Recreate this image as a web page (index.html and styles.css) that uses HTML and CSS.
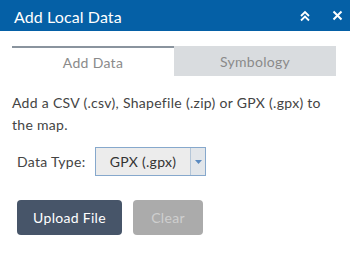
FILE: index.html
```html
<!DOCTYPE html>
<html lang="en">
<head>
    <meta charset="UTF-8">
    <title>Add Local Data</title>
    <link rel="stylesheet" href="styles.css">
</head>
<body>
    <div class="panel">
        <div class="panel-header">
            <span class="panel-title">Add Local Data</span>
            <div class="panel-icons">
                <svg class="icon" width="12" height="12" viewBox="0 0 12 12">
                    <path d="M2 6 L6 2 L10 6 M2 10.5 L6 6.5 L10 10.5" fill="none" stroke="#fff" stroke-width="1.8"/>
                </svg>
                <svg class="icon" width="11" height="11" viewBox="0 0 11 11">
                    <path d="M1.5 1.5 L9.5 9.5 M9.5 1.5 L1.5 9.5" fill="none" stroke="#fff" stroke-width="2"/>
                </svg>
            </div>
        </div>

        <div class="tabs">
            <div class="tab active">Add Data</div>
            <div class="tab">Symbology</div>
        </div>

        <p class="intro">Add a CSV (.csv), Shapefile (.zip) or GPX (.gpx) to the map.</p>

        <div class="field">
            <span class="field-label">Data Type:</span>
            <div class="select">
                <span class="select-value">GPX (.gpx)</span>
                <span class="select-arrow">
                    <svg width="7" height="4" viewBox="0 0 7 4"><path d="M0 0 L7 0 L3.5 4 Z" fill="#5a8ac0"/></svg>
                </span>
            </div>
        </div>

        <div class="actions">
            <button class="btn btn-primary">Upload File</button>
            <button class="btn btn-disabled">Clear</button>
        </div>
    </div>
</body>
</html>
```

FILE: styles.css
```css
body {
    margin: 0;
    background: #fff;
    font-family: Lato, "Open Sans", sans-serif;
    letter-spacing: 0.3px;
    color: #444;
}

.panel {
    width: 350px;
    height: 253px;
}

.panel-header {
    height: 31px;
    background-color: #0560a6;
    color: #fff;
    display: flex;
    align-items: center;
    justify-content: space-between;
    padding: 0 7px 0 14px;
}

.panel-title {
    font-size: 16px;
    padding-top: 1px;
    letter-spacing: 0.1px;
}

.panel-icons {
    display: flex;
    align-items: center;
    gap: 21px;
}

.icon {
    display: block;
}

.tabs {
    display: flex;
    margin: 15px 14px 0 12px;
}

.tab {
    flex: 1;
    height: 30px;
    box-sizing: border-box;
    display: flex;
    align-items: center;
    justify-content: center;
    font-size: 14px;
    color: #8a8a8a;
    background-color: #d9dcdf;
}

.tab.active {
    background-color: #fff;
    border-top: 2px solid #8a949e;
}

.intro {
    margin: 16px 14px 0 12px;
    font-size: 14px;
    line-height: 22px;
    color: #444;
}

.field {
    display: flex;
    align-items: center;
    margin: 11px 0 0 17px;
}

.field-label {
    font-size: 14px;
    width: 78px;
}

.select {
    display: flex;
    height: 29px;
    width: 111px;
    box-sizing: border-box;
    border: 1px solid #86a8cc;
}

.select-value {
    flex: 1;
    display: flex;
    align-items: center;
    justify-content: center;
    background-color: #ececec;
    font-size: 14px;
    color: #333;
    border-right: 1px solid #b4c6d8;
}

.select-arrow {
    width: 14px;
    display: flex;
    align-items: center;
    justify-content: center;
    background-color: #e2e6ea;
}

.actions {
    display: flex;
    gap: 11px;
    margin: 24px 0 0 17px;
}

.btn {
    height: 35px;
    border: none;
    border-radius: 4px;
    font-family: Lato, "Open Sans", sans-serif;
    letter-spacing: 0.3px;
    font-size: 14px;
    padding: 0;
}

.btn-primary {
    width: 105px;
    background-color: #475569;
    color: #fff;
}

.btn-disabled {
    width: 70px;
    background-color: #ababab;
    color: #cfcfcf;
}
```
